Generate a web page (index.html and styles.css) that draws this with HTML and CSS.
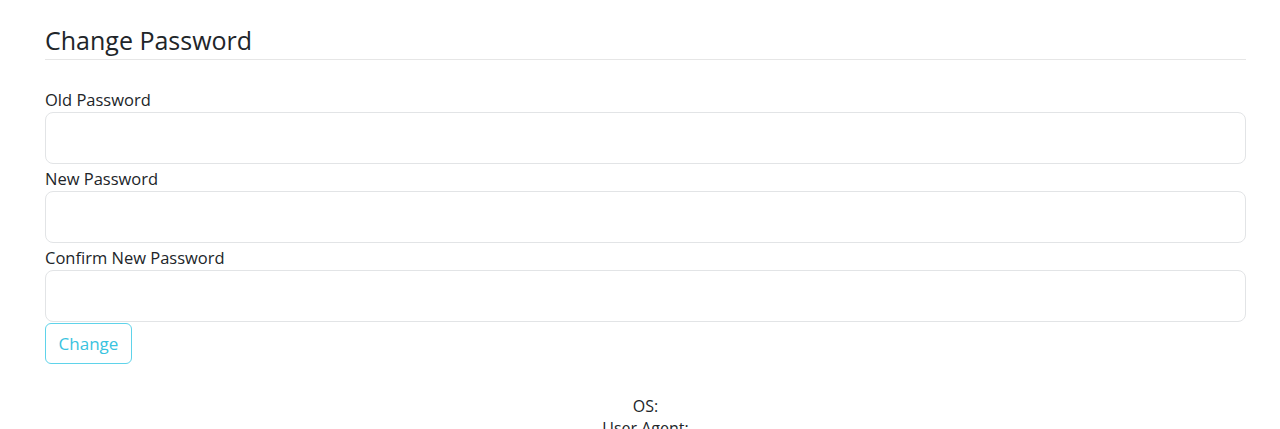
FILE: index.html
```html
<!DOCTYPE html>
<html>
<head>
<meta charset="utf-8">
<link rel="stylesheet" href="styles.css">
</head>
<body>
<main class="page">
  <h2 class="title">Change Password</h2>
  <form class="form">
    <div class="field">
      <label class="label">Old Password</label>
      <input class="input" type="password">
    </div>
    <div class="field">
      <label class="label">New Password</label>
      <input class="input" type="password">
    </div>
    <div class="field">
      <label class="label">Confirm New Password</label>
      <input class="input" type="password">
    </div>
    <div class="actions"><button class="btn" type="button">Change</button></div>
  </form>
  <footer class="info">
    <div>OS:</div>
    <div>User Agent:</div>
  </footer>
</main>
</body>
</html>
```
FILE: styles.css
```css
html, body { margin: 0; padding: 0; background: #fff; }
body { font-family: "Open Sans", "Noto Sans", sans-serif; color: #212529; }
.page { width: 1201px; margin-left: 45px; padding-top: 22px; }
.title {
  margin: 0; font-size: 25px; font-weight: 400; line-height: 36px;
  padding-bottom: 1px; border-bottom: 1px solid #e6e6e6;
}
.form { margin-top: 25px; display: flex; flex-direction: column; }
.field { display: flex; flex-direction: column; }
.label { font-size: 16.5px; line-height: 24px; padding-top: 3px; }
.input {
  box-sizing: border-box; height: 52px; width: 100%;
  border: 1px solid #e2e4e6; border-radius: 8px; outline: none; margin: 0;
}
.actions { padding-top: 1px; }
.btn {
  box-sizing: border-box; height: 41px; width: 87px; background: #fff;
  border: 1px solid #5fd3ea; border-radius: 6px; color: #39c3e0;
  font-family: inherit; font-size: 17px; padding: 0;
}
.info { margin-top: 31px; text-align: center; font-size: 16px; line-height: 22px; color: #212529; }
```
